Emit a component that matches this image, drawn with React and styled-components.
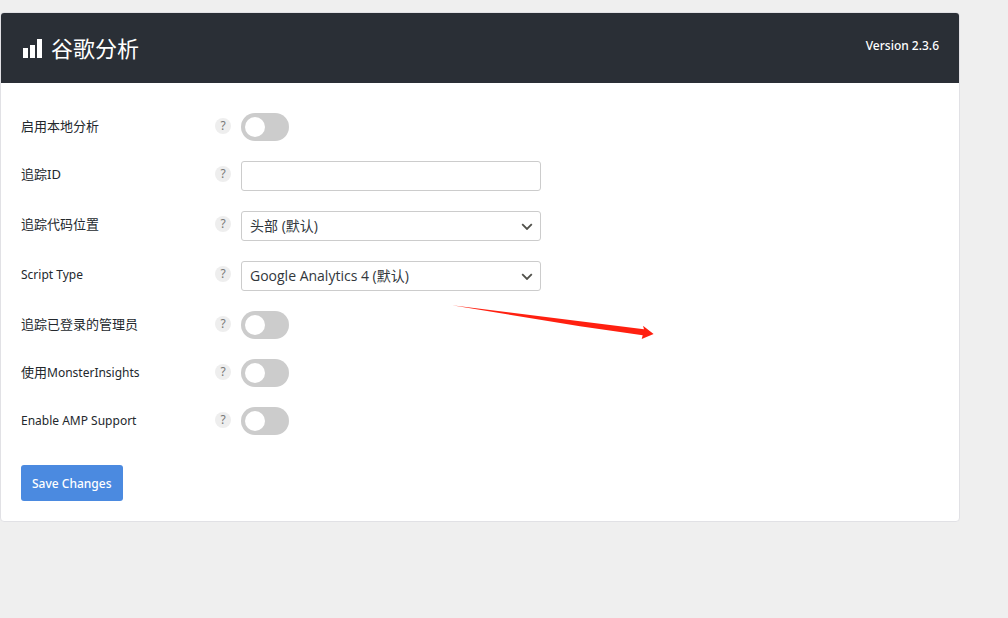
import React, { useState } from 'react'
import styled, { createGlobalStyle } from 'styled-components'

const GlobalStyle = createGlobalStyle`
  * {
    box-sizing: border-box;
  }

  body {
    margin: 0;
    background: #efefef;
    color: #23282d;
    font-family: "Noto Sans", "Noto Sans CJK SC", sans-serif;
    font-size: 13px;
    line-height: 26px;
  }
`

const Panel = styled.main`
  position: relative;
  margin: 12px 48px 0 0;
  background: #fff;
  border: 1px solid #e1e1e5;
  border-radius: 4px;
`

const Header = styled.header`
  display: flex;
  justify-content: space-between;
  align-items: flex-start;
  padding: 20px 20px 20px 22px;
  background: #2a2f36;
  color: #fff;
  border-radius: 3px 3px 0 0;
`

const Title = styled.h1`
  display: flex;
  align-items: center;
  gap: 8px;
  margin: 0;
  font-size: 22px;
  font-weight: 400;
  line-height: 30px;
`

const Version = styled.span`
  font-size: 12px;
  font-weight: 500;
  line-height: 26px;
`

const Form = styled.form`
  display: flex;
  flex-direction: column;
  gap: 20px;
  padding: 30px 20px 20px;
`

const Row = styled.div`
  display: flex;
  align-items: flex-start;
  gap: 10px;
`

const LabelCell = styled.div`
  display: flex;
  flex: 0 0 210px;
  justify-content: space-between;
  align-items: center;
  height: 26px;
`

const Latin = styled.span`
  font-size: 12px;
`

const Help = styled.button`
  width: 16px;
  height: 16px;
  padding: 0;
  border: 0;
  border-radius: 50%;
  background: #eee;
  color: #777;
  font-family: inherit;
  font-size: 12px;
  line-height: 16px;
  text-align: center;
`

const Switch = styled.input`
  appearance: none;
  display: flex;
  align-items: center;
  width: 48px;
  height: 28px;
  margin: 0;
  padding: 4px;
  border-radius: 14px;
  background: #ccc;
  cursor: pointer;

  &::before {
    content: '';
    width: 20px;
    height: 20px;
    border-radius: 50%;
    background: #fff;
  }

  &:checked {
    justify-content: flex-end;
    background: #4b8ae0;
  }
`

const TextInput = styled.input`
  width: 300px;
  height: 30px;
  padding: 0 8px;
  border: 1px solid #ccc;
  border-radius: 3px;
  background: #fff;
  color: #32373c;
  font-family: inherit;
  font-size: 14px;
`

const SelectWrap = styled.div`
  display: grid;
  width: 300px;
  align-items: center;

  select,
  svg {
    grid-area: 1 / 1;
  }

  svg {
    justify-self: end;
    margin-right: 8px;
    pointer-events: none;
  }
`

const Select = styled.select`
  appearance: none;
  width: 100%;
  height: 30px;
  padding: 0 24px 2px 8px;
  border: 1px solid #ccc;
  border-radius: 3px;
  background: #fff;
  color: #32373c;
  font-family: "Open Sans", "Noto Sans CJK SC", sans-serif;
  font-size: 14px;
`

const SaveButton = styled.button`
  align-self: flex-start;
  height: 36px;
  margin-top: 10px;
  padding: 0 11px;
  border: 0;
  border-radius: 3px;
  background: #4b8ae0;
  color: #fff;
  font-family: inherit;
  font-size: 12px;
  font-weight: 500;
  cursor: pointer;
`

const Pointer = styled.svg`
  position: absolute;
  top: 290px;
  left: 449px;
  pointer-events: none;
`

const fields = [
  { id: 'local', label: '启用本地分析', type: 'switch' },
  { id: 'tracking-id', label: '追踪ID', type: 'text' },
  { id: 'position', label: '追踪代码位置', type: 'select', options: ['头部 (默认)'] },
  { id: 'script-type', label: <Latin>Script Type</Latin>, type: 'select', options: ['Google Analytics 4 (默认)'] },
  { id: 'admins', label: '追踪已登录的管理员', type: 'switch' },
  { id: 'monster', label: <>使用<Latin>MonsterInsights</Latin></>, type: 'switch' },
  { id: 'amp', label: <Latin>Enable AMP Support</Latin>, type: 'switch' },
]

function ChartIcon() {
  return (
    <svg width="20" height="20" viewBox="0 0 20 20" fill="#fff" aria-hidden="true">
      <path d="M0 10h5v10H0zM7 7h5v13H7zM14 1h5v19h-5z" />
    </svg>
  )
}

function Control({ field }) {
  const [checked, setChecked] = useState(false)

  if (field.type === 'switch') {
    return <Switch id={field.id} type="checkbox" checked={checked} onChange={e => setChecked(e.target.checked)} />
  }
  if (field.type === 'text') {
    return <TextInput id={field.id} type="text" />
  }
  return (
    <SelectWrap>
      <Select id={field.id}>
        {field.options.map(option => <option key={option}>{option}</option>)}
      </Select>
      <svg width="12" height="8" viewBox="0 0 12 8" fill="none" stroke="#50504a" strokeWidth="1.8" aria-hidden="true">
        <path d="M1.2 2.2L6 7l4.800-4.800" />
      </svg>
    </SelectWrap>
  )
}

export default function App() {
  return (
    <>
      <GlobalStyle />
      <Panel>
        <Header>
          <Title><ChartIcon />谷歌分析</Title>
          <Version>Version 2.3.6</Version>
        </Header>
        <Form onSubmit={e => e.preventDefault()}>
          {fields.map(field => (
            <Row key={field.id}>
              <LabelCell>
                <label htmlFor={field.id}>{field.label}</label>
                <Help type="button">?</Help>
              </LabelCell>
              <Control field={field} />
            </Row>
          ))}
          <SaveButton type="submit">Save Changes</SaveButton>
        </Form>
        <Pointer width="208" height="40" viewBox="0 0 208 40" aria-hidden="true">
          <path d="M2 2.300L194 26.300L193 22.700L203.600 31L191.700 36L192.700 32.300L130 23.300Z" fill="#ff2010" />
        </Pointer>
      </Panel>
    </>
  )
}
